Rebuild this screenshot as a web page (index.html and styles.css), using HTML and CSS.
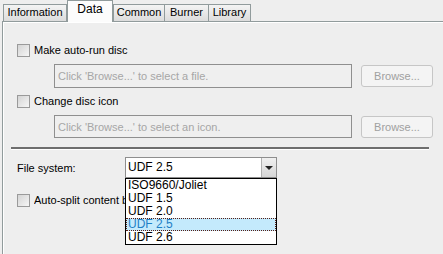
FILE: index.html
```html
<!DOCTYPE html>
<html>
<head>
<link rel="stylesheet" href="styles.css">
<title>Data</title>
</head>
<body>
	<div class="tabs">
		<div class="tab tab-info">Information</div>
		<div class="tab active tab-data">Data</div>
		<div class="tab tab-common">Common</div>
		<div class="tab tab-burner">Burner</div>
		<div class="tab tab-library">Library</div>
	</div>
	<div class="panel">
		<div class="check-row">
			<span class="checkbox"></span>
			<span>Make auto-run disc</span>
		</div>
		<div class="browse-row">
			<div class="field">Click 'Browse...' to select a file.</div>
			<div class="button">Browse...</div>
		</div>
		<div class="check-row">
			<span class="checkbox"></span>
			<span>Change disc icon</span>
		</div>
		<div class="browse-row second">
			<div class="field">Click 'Browse...' to select an icon.</div>
			<div class="button">Browse...</div>
		</div>
		<div class="separator"></div>
		<div class="fs-row">
			<span class="fs-label">File system:</span>
			<div class="select">
				<div class="select-value">UDF 2.5</div>
				<div class="select-arrow"><span class="arrow"></span></div>
				<ul class="options">
					<li>ISO9660/Joliet</li>
					<li>UDF 1.5</li>
					<li>UDF 2.0</li>
					<li class="selected">UDF 2.5</li>
					<li>UDF 2.6</li>
				</ul>
			</div>
		</div>
		<div class="check-row split">
			<span class="checkbox"></span>
			<span class="clipped">Auto-split content between discs</span>
		</div>
	</div>
</body>
</html>
```

FILE: styles.css
```css
body {
  margin: 0;
  background: #EEEEEE;
  font-family: "Liberation Sans", Arial, sans-serif;
  font-size: 11px;
  color: #000;
  overflow: hidden;
  height: 254px;
}

.tabs {
  display: flex;
  align-items: flex-end;
  height: 21px;
  padding-left: 3px;
}

.tab {
  box-sizing: border-box;
  height: 17px;
  line-height: 15px;
  text-align: center;
  border: 1px solid #919B9C;
  border-bottom: none;
  background: linear-gradient(#F4F4F4, #DCDCDC);
  margin-right: -1px;
}

.tab-info { width: 64px; }
.tab-data { width: 46px; }
.tab-common { width: 52px; }
.tab-burner { width: 45px; }
.tab-library { width: 43px; }

.tab.active {
  position: relative;
  z-index: 1;
  height: 22px;
  margin-bottom: -1px;
  line-height: 17px;
  background: #FCFCFC;
  border-color: #919B9C;
  margin-left: 1px;
  margin-right: 0;
  font-size: 12px;
}

.panel {
  margin-left: 2px;
  border-top: 1px solid #919B9C;
  border-left: 1px solid #919B9C;
  box-shadow: inset 1px 1px 0 #FFFFFF;
  padding: 22px 0 0 14px;
  height: 240px;
  box-sizing: border-box;
  display: flex;
  flex-direction: column;
}

.check-row {
  display: flex;
  align-items: center;
  gap: 4px;
  height: 13px;
  line-height: 13px;
  white-space: nowrap;
}

.checkbox {
  box-sizing: border-box;
  width: 13px;
  height: 13px;
  border: 1px solid #9A9A9A;
  background: linear-gradient(135deg, #D4D4D4, #F6F6F6);
}

.browse-row {
  display: flex;
  align-items: center;
  gap: 9px;
  margin: 7px 0 7px 37px;
  height: 24px;
}

.browse-row.second {
  margin-top: 7px;
  height: 23px;
  margin-bottom: 9px;
}

.field {
  box-sizing: border-box;
  width: 298px;
  height: 100%;
  border: 1px solid #8F8F8F;
  background: #EFEFEF;
  color: #A6A6A6;
  padding-left: 3px;
  display: flex;
  align-items: center;
}

.button {
  box-sizing: border-box;
  width: 72px;
  height: 22px;
  border: 1px solid #C6C6C6;
  border-radius: 3px;
  background: #F4F4F4;
  color: #A0A0A0;
  text-align: center;
  line-height: 20px;
}

.separator {
  margin-left: -6px;
  width: 418px;
  height: 2px;
  background: #6E6E6E;
  border-bottom: 1px solid #FFFFFF;
}

.fs-row {
  display: flex;
  align-items: center;
  margin-top: 7px;
  height: 21px;
}

.fs-label {
  width: 108px;
}

.select {
  position: relative;
  box-sizing: border-box;
  width: 152px;
  height: 21px;
  border: 1px solid #8E8E8E;
  background: #FFFFFF;
  display: flex;
}

.select-value {
  flex: 1;
  font-size: 12px;
  line-height: 19px;
  padding-left: 2px;
}

.select-arrow {
  width: 14px;
  border-left: 1px solid #B0B0B0;
  background: linear-gradient(#F0F0F0, #D6D6D6);
  display: flex;
  align-items: center;
  justify-content: center;
}

.arrow {
  width: 0;
  height: 0;
  border-left: 4px solid transparent;
  border-right: 4px solid transparent;
  border-top: 4px solid #222;
  margin-top: 1px;
}

.options {
  position: absolute;
  z-index: 2;
  top: 20px;
  left: -1px;
  width: 152px;
  box-sizing: border-box;
  margin: 0;
  padding: 0;
  list-style: none;
  background: #FFFFFF;
  border: 1px solid #000000;
  font-size: 12px;
}

.options li {
  height: 13px;
  line-height: 13px;
  padding-left: 2px;
  box-sizing: border-box;
}

.options li.selected {
  background: #C4EAFC;
  color: #1E7FC6;
  outline: 1px dotted #5A1E14;
  outline-offset: -1px;
}

.check-row.split {
  margin-top: 16px;
}

.clipped {
  display: block;
  width: 91px;
  overflow: hidden;
}
```
